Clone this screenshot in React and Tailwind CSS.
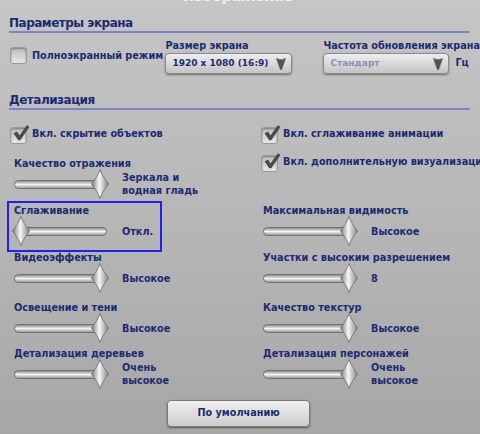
import { useId } from 'react';

const NAVY = 'text-[#1b2a73]';
const LABEL = `text-[9.7px] font-bold ${NAVY}`;

function Thumb({ className }) {
  const id = useId();
  return (
    <svg width="18" height="30" viewBox="0 0 18 30" className={className}>
      <defs>
        <linearGradient id={id} x1="0" x2="1" y1="0" y2="0">
          <stop offset="0" stopColor="#777" />
          <stop offset="0.45" stopColor="#f7f7f7" />
          <stop offset="0.6" stopColor="#d8d8d8" />
          <stop offset="1" stopColor="#848484" />
        </linearGradient>
      </defs>
      <path
        d="M9 0.5 C10.5 6 14.5 10.5 17.5 15 C14.5 19.5 10.5 24 9 29.5 C7.5 24 3.5 19.5 0.5 15 C3.5 10.5 7.5 6 9 0.5 Z"
        fill={`url(#${id})`}
        stroke="#6b6b6b"
        strokeWidth="0.8"
      />
    </svg>
  );
}

function Slider({ label, value, min, className = '' }) {
  return (
    <div className={className}>
      <div className={`h-[14px] whitespace-nowrap leading-[14px] ${LABEL}`}>{label}</div>
      <div className="-mt-[2px] flex h-[30px] items-center">
        <div className="relative h-[30px] w-[93px] shrink-0">
          <div className="absolute left-0 right-0 top-[11px] h-[9px] rounded-full border border-[#707070] bg-gradient-to-b from-[#8e8e8e] via-[#f3f3f3] to-[#9c9c9c]" />
          <Thumb className={min ? 'absolute left-[-2px] top-0' : 'absolute left-[77px] top-0'} />
        </div>
        <div className={`ml-[15px] leading-[13px] ${LABEL}`}>
          {value.map((v) => (
            <div key={v} className="whitespace-nowrap">{v}</div>
          ))}
        </div>
      </div>
    </div>
  );
}

function Checkbox({ label, checked, className = '' }) {
  return (
    <div className={`flex items-center gap-[5px] ${className}`}>
      <div className="relative h-[17px] w-[17px] shrink-0 rounded-[3px] border border-[#9a9a9a] bg-gradient-to-b from-[#bcbcbc] to-[#e8e8e8] shadow-[inset_0_1px_2px_rgba(0,0,0,0.35)]">
        {checked && (
          <svg width="18" height="18" viewBox="0 0 18 18" className="absolute left-[1px] top-[-4px]">
            <path d="M2 9.5 L5 8 L7.5 12 L15 1.5 L17 3 L8 16 L6.5 16 Z" fill="#4a4a4a" stroke="#333" strokeWidth="0.6" strokeLinejoin="round" />
          </svg>
        )}
      </div>
      <span className={`whitespace-nowrap leading-[14px] ${LABEL}`}>{label}</span>
    </div>
  );
}

function Select({ value, muted, className = '' }) {
  return (
    <div className={`flex h-[21px] items-center justify-between rounded-[4px] border border-[#8a8a8a] bg-gradient-to-b from-[#eeeeee] to-[#c4c4c4] pl-[6px] pr-[5px] shadow-[0_1px_2px_rgba(0,0,0,0.45)] ${className}`}>
      <span className={`whitespace-nowrap text-[9px] font-bold ${muted ? 'text-[#8492b4]' : NAVY}`}>{value}</span>
      <svg width="10" height="12" viewBox="0 0 10 12">
        <path d="M0.5 0.5 Q5 3 9.5 0.5 L5.6 11.5 L4.4 11.5 Z" fill="#555" stroke="#3d3d3d" strokeWidth="0.5" />
      </svg>
    </div>
  );
}

function SectionHeader({ children, className = '' }) {
  return (
    <div className={`mr-[10px] border-b-2 border-[#7d84c9] ${className}`}>
      <div className={`h-[16px] text-[12px] font-bold leading-[16px] tracking-[-0.5px] ${NAVY}`}>{children}</div>
    </div>
  );
}

export default function App() {
  return (
    <div className="h-[434px] w-[480px] overflow-hidden bg-gradient-to-b from-[#c6c6c6] to-[#a7a7a7] font-['DejaVu_Sans',sans-serif]">
      {/* window caption, mostly scrolled off the top */}
      <div className="-mt-[12px] h-[16px] pr-[4px] text-center text-[14px] font-bold leading-[16px] text-[#eef3f6]">Изображение</div>

      <div className="pl-[9px]">
        <SectionHeader className="mt-[11px]">Параметры экрана</SectionHeader>

        <div className="mt-[6px] flex">
          <Checkbox label="Полноэкранный режим" className="ml-[1px] mt-[8px] w-[160px] self-start" />
          <div className="w-[158px] shrink-0">
            <div className={`h-[13px] leading-[13px] ${LABEL}`}>Размер экрана</div>
            <Select value="1920 x 1080 (16:9)" className="mt-[1px] w-[127px]" />
          </div>
          <div className="shrink-0">
            <div className={`h-[13px] whitespace-nowrap leading-[13px] ${LABEL}`}>Частота обновления экрана</div>
            <div className="mt-[1px] flex items-center">
              <Select value="Стандарт" muted className="w-[126px]" />
              <span className={`ml-[6px] ${LABEL}`}>Гц</span>
            </div>
          </div>
        </div>

        <SectionHeader className="mt-[18px]">Детализация</SectionHeader>

        <div className="mt-[17px] grid grid-cols-[251px_1fr] pl-[1px]">
          <Checkbox checked label="Вкл. скрытие объектов" className="h-[30px] items-start" />
          <Checkbox checked label="Вкл. сглаживание анимации" className="h-[30px] items-start" />

          <Slider label="Качество отражения" value={['Зеркала и', 'водная гладь']} className="ml-[4px] h-[47px]" />
          <Checkbox checked label="Вкл. дополнительную визуализацию" className="-mt-[2px] h-[47px] items-start" />

          <div className="relative ml-[4px] h-[47px]">
            <div className="absolute left-[-7px] top-[-3px] h-[51px] w-[155px] border-2 border-[#2020f0]" />
            <Slider label="Сглаживание" value={['Откл.']} min />
          </div>
          <Slider label="Максимальная видимость" value={['Высокое']} className="ml-[2px] h-[47px]" />

          <Slider label="Видеоэффекты" value={['Высокое']} className="ml-[4px] h-[50px]" />
          <Slider label="Участки с высоким разрешением" value={['8']} className="ml-[2px] h-[50px]" />

          <Slider label="Освещение и тени" value={['Высокое']} className="ml-[4px] h-[46px]" />
          <Slider label="Качество текстур" value={['Высокое']} className="ml-[2px] h-[46px]" />

          <Slider label="Детализация деревьев" value={['Очень', 'высокое']} className="ml-[4px]" />
          <Slider label="Детализация персонажей" value={['Очень', 'высокое']} className="ml-[2px]" />
        </div>
      </div>

      <button className={`ml-[167px] mt-[11px] flex h-[27px] w-[143px] items-center justify-center rounded-[4px] border border-[#7a7a7a] bg-gradient-to-b from-[#efefef] to-[#cdcdcd] shadow-[0_1px_2px_rgba(0,0,0,0.5)] ${LABEL}`}>
        По умолчанию
      </button>
    </div>
  );
}
